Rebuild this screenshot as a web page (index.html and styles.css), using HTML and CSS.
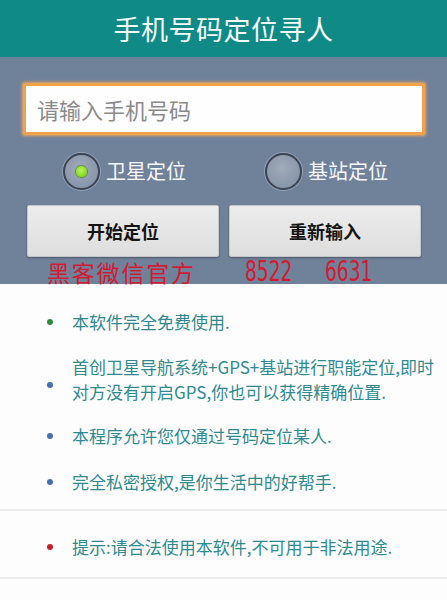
FILE: index.html
```html
<!DOCTYPE html>
<html lang="zh-CN">
<head>
<meta charset="utf-8">
<title>手机号码定位寻人</title>
<link rel="stylesheet" href="styles.css">
</head>
<body>
<header class="topbar">手机号码定位寻人</header>
<section class="panel">
  <div class="input">请输入手机号码</div>
  <div class="row radios">
    <div class="radio-cell">
      <span class="radio checked"><span class="dot"></span></span>
      <span class="radio-label">卫星定位</span>
    </div>
    <div class="radio-cell">
      <span class="radio"></span>
      <span class="radio-label">基站定位</span>
    </div>
  </div>
  <div class="row buttons">
    <div class="btn">开始定位</div>
    <div class="btn">重新输入</div>
  </div>
  <div class="promo"><span class="promo-cn">黑客微信官方</span><span class="num">8522</span><span class="num">6631</span></div>
</section>
<section class="info">
  <ul class="list">
    <li class="item"><span class="bullet green"></span><span class="txt">本软件完全免费使用.</span></li>
    <li class="item two"><span class="bullet blue"></span><span class="txt"><span class="line">首创卫星导航系统+GPS+基站进行职能定位,即时</span><span class="line">对方没有开启GPS,你也可以获得精确位置.</span></span></li>
    <li class="item"><span class="bullet blue"></span><span class="txt">本程序允许您仅通过号码定位某人.</span></li>
    <li class="item"><span class="bullet blue"></span><span class="txt">完全私密授权,是你生活中的好帮手.</span></li>
  </ul>
  <div class="divider"></div>
  <ul class="list tip">
    <li class="item"><span class="bullet red"></span><span class="txt">提示:请合法使用本软件,不可用于非法用途.</span></li>
  </ul>
  <div class="divider"></div>
</section>
</body>
</html>
```
FILE: styles.css
```css
html, body {
  margin: 0;
  padding: 0;
  background: #fdfdfd;
  width: 447px;
  height: 600px;
  overflow: hidden;
  font-family: "Noto Sans CJK SC", "Noto Sans", sans-serif;
}
.topbar {
  height: 57px;
  background: #0f8a86;
  color: #f4fbfa;
  font-size: 27px;
  line-height: 58px;
  text-align: center;
  letter-spacing: 0.5px;
}
.panel {
  background: #70819a;
  padding-top: 26px;
  height: 201px;
}
.input {
  margin: 0 22px 0 23px;
  height: 46px;
  border: 3px solid #f2a24a;
  box-shadow: 0 0 3px 1px #e8a866;
  background: #fefefe;
  color: #8a8a8a;
  font-size: 22px;
  line-height: 46px;
  padding-left: 11px;
  border-radius: 2px;
}
.row {
  display: grid;
  grid-template-columns: 192px 192px;
  column-gap: 10px;
  padding-left: 27px;
}
.radios {
  margin-top: 17px;
  height: 38px;
}
.radio-cell {
  display: flex;
  align-items: center;
  padding-left: 36px;
  gap: 6px;
}
.radio {
  width: 33px;
  height: 33px;
  border-radius: 50%;
  border: 2px solid #3b4452;
  background: radial-gradient(circle at 45% 40%, #a1abb9 0%, #8b99ac 60%, #808fa4 100%);
  box-shadow: 0 0 0 1px #95a3b5;
  display: flex;
  align-items: center;
  justify-content: center;
}
.dot {
  width: 11px;
  height: 11px;
  border-radius: 50%;
  background: radial-gradient(circle at 45% 40%, #b8f35c 0%, #86d91f 70%, #5fa818 100%);
  box-shadow: 0 0 0 1px #5b8f2a;
}
.radio-label {
  color: #f5f6f8;
  font-size: 20px;
  line-height: 24px;
}
.buttons {
  margin-top: 15px;
}
.btn {
  height: 52px;
  background: linear-gradient(#ececec, #dedede);
  border: 1px solid #c4c6ca;
  box-sizing: border-box;
  box-shadow: 0 1px 2px rgba(40, 50, 60, 0.5);
  color: #151515;
  font-size: 18px;
  font-weight: bold;
  display: flex;
  align-items: center;
  justify-content: center;
  border-radius: 2px;
}
.promo {
  margin-top: 2px;
  padding-left: 47px;
  color: #d21a33;
  height: 26px;
  display: flex;
  align-items: center;
}
.promo-cn {
  font-size: 23px;
  letter-spacing: 1.8px;
  line-height: 26px;
  width: 198px;
}
.num {
  font-family: "DejaVu Sans Condensed", "DejaVu Sans", sans-serif;
  font-size: 28px;
  line-height: 26px;
  width: 80px;
  display: inline-block;
  transform: scaleX(0.74);
  transform-origin: left center;
}
.info {
  padding-top: 15px;
}
.list {
  list-style: none;
  margin: 0;
  padding: 0;
}
.item {
  display: flex;
  align-items: center;
  padding: 12px 0;
  white-space: nowrap;
}
.bullet {
  width: 6px;
  height: 6px;
  border-radius: 50%;
  margin-left: 47px;
  margin-right: 19px;
  flex: none;
}
.green { background: #2e8b3b; }
.blue { background: #4570ad; }
.red { background: #c81e2a; }
.txt {
  color: #2f8a90;
  font-size: 17px;
  line-height: 22px;
}
.line {
  display: block;
}
.item.two {
  padding: 9px 0;
}
.item.two .txt {
  line-height: 25px;
}
.item.two .bullet { margin-top: 12px; }
.divider {
  height: 2px;
  background: #ebebeb;
  margin-top: 4px;
}
.tip .item {
  padding: 25px 0 15px;
}
```
